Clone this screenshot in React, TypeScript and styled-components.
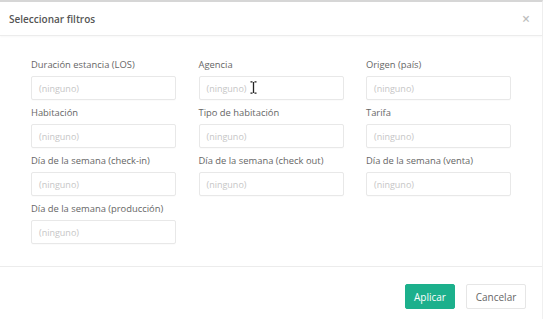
import React from "react";
import styled, { createGlobalStyle } from "styled-components";

const Global = createGlobalStyle`
  html, body { margin: 0; padding: 0; background: #fff; }
  body { font-family: "Open Sans", "Noto Sans", sans-serif; }
  * { box-sizing: border-box; }
`;

const Modal = styled.div`
  width: 543px;
  height: 319px;
  border-top: 2px solid #d6d6d6;
  border-right: 1px solid #f0f0f0;
  display: flex;
  flex-direction: column;
  background: #fff;
`;

const Header = styled.div`
  height: 34px;
  padding: 0 12px 0 9px;
  display: flex;
  align-items: center;
  justify-content: space-between;
  border-bottom: 1px solid #ececec;
  box-shadow: 0 1px 2px rgba(0, 0, 0, 0.03);
`;

const Title = styled.h4`
  margin: 0;
  font-size: 10px;
  font-weight: 600;
  color: #555;
`;

const Close = styled.span`
  font-size: 14px;
  color: #bdbdbd;
  line-height: 1;
  font-weight: 600;
`;

const Body = styled.div`
  padding: 22px 0 22px 31px;
  border-bottom: 1px solid #ececec;
  display: grid;
  grid-template-columns: repeat(3, 145px);
  column-gap: 22.5px;
  row-gap: 6px;
`;

const Field = styled.div`
  position: relative;
  display: flex;
  flex-direction: column;
  gap: 4px;
`;

const Label = styled.label`
  font-size: 9.4px;
  line-height: 14px;
  color: #666;
  white-space: nowrap;
`;

const Input = styled.div`
  height: 24px;
  border: 1px solid #e8e8e8;
  border-radius: 2px;
  padding: 0 7px;
  display: flex;
  align-items: center;
  font-size: 9px;
  color: #c6c6c6;
  box-shadow: 0 1px 1px rgba(0, 0, 0, 0.02);
`;

const Cursor = styled.svg`
  position: absolute;
  left: 51px;
  top: 23px;
`;

const Footer = styled.div`
  flex: 1;
  display: flex;
  justify-content: flex-end;
  align-items: flex-start;
  padding: 17px 16px 0 0;
  gap: 11px;
`;

const Button = styled.button<{ $primary?: boolean }>`
  height: 25px;
  padding: 0;
  width: ${(p) => (p.$primary ? "50px" : "60px")};
  border-radius: 2px;
  font-family: "Open Sans", "Noto Sans", sans-serif;
  font-size: 10px;
  border: 1px solid ${(p) => (p.$primary ? "#1cb08c" : "#e6e6e6")};
  background: ${(p) => (p.$primary ? "#1cb08c" : "#fff")};
  color: ${(p) => (p.$primary ? "#fff" : "#666")};
`;

const fields = [
  "Duración estancia (LOS)",
  "Agencia",
  "Origen (país)",
  "Habitación",
  "Tipo de habitación",
  "Tarifa",
  "Día de la semana (check-in)",
  "Día de la semana (check out)",
  "Día de la semana (venta)",
  "Día de la semana (producción)",
];

export default function App() {
  return (
    <>
      <Global />
      <Modal>
        <Header>
          <Title>Seleccionar filtros</Title>
          <Close>×</Close>
        </Header>
        <Body>
          {fields.map((f) => (
            <Field key={f}>
              <Label>{f}</Label>
              <Input>(ninguno)</Input>
              {f === "Agencia" && (
                <Cursor width="7" height="13" viewBox="0 0 7 13">
                  <path d="M0.5 0.8 H2.5 M4.5 0.8 H6.5 M3.5 1 V12 M0.5 12.2 H2.5 M4.5 12.2 H6.5" stroke="#222" strokeWidth="1.3" fill="none" />
                </Cursor>
              )}
            </Field>
          ))}
        </Body>
        <Footer>
          <Button $primary>Aplicar</Button>
          <Button>Cancelar</Button>
        </Footer>
      </Modal>
    </>
  );
}
